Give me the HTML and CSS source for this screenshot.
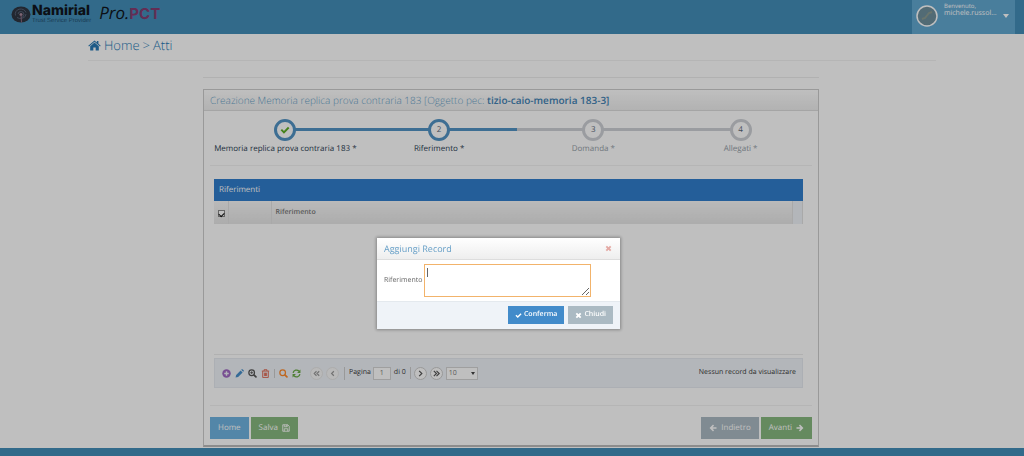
FILE: index.html
```html
<!DOCTYPE html>
<html lang="it">
<head>
<meta charset="utf-8">
<title>Pro.PCT - Atti</title>
<link rel="stylesheet" href="styles.css">
</head>
<body>
<svg class="defs" aria-hidden="true">
  <symbol id="check" viewBox="0 0 16 16"><path d="M1 8.5 3.2 6.3 6.3 9.4 12.8 2.9 15 5.1 6.3 13.8z"/></symbol>
  <symbol id="times" viewBox="0 0 16 16"><path d="M1.5 4.5 4.5 1.5 8 5 11.500 1.500 14.500 4.500 11 8 14.500 11.500 11.500 14.500 8 11 4.500 14.500 1.500 11.500 5 8z"/></symbol>
  <symbol id="arrow" viewBox="0 0 16 16"><path d="M1 6.500h8L5.800 3.300 8 1.100 14.900 8 8 14.900 5.800 12.700 9 9.500H1z"/></symbol>
  <symbol id="search" viewBox="0 0 16 16"><path fill="none" stroke="currentColor" stroke-width="2.200" d="M6.500 1.600a5 5 0 1 0 0 10 5 5 0 1 0 0-10z"/><path fill="none" stroke="currentColor" stroke-width="3" stroke-linecap="round" d="m10.800 10.800 3.300 3.300"/></symbol>
</svg>

<header class="navbar">
  <a class="brand" href="#">
    <svg class="brand-mark" viewBox="0 0 40 34" aria-hidden="true">
      <ellipse cx="20" cy="17" rx="19" ry="16" fill="#2e3440"/>
      <path d="M9 19a11 10 0 0 1 21-6M12 23a11 9 0 0 0 18-7M14 16a6 6 0 1 1 6 7" fill="none" stroke="#566176" stroke-width="2"/>
      <circle cx="20" cy="17" r="3" fill="#a98a9c"/>
      <path d="M20 18l1 15" stroke="#8c6a80" stroke-width="2"/>
    </svg>
    <span class="brand-name"><b>Namirial</b><small>Trust Service Provider</small></span>
    <span class="product"><i>Pro.</i><b>PCT</b></span>
  </a>
  <button class="user" type="button">
    <svg class="avatar" viewBox="0 0 22 22" aria-hidden="true"><circle cx="11" cy="11" r="10" fill="#6e8f9c" stroke="#fff" stroke-width="1.500"/><path d="M6 14l3-1 4-5 3-1" fill="none" stroke="#8d9c92" stroke-width="2"/></svg>
    <span class="user-text"><small>Benvenuto,</small><span>michele.russol...</span></span>
    <svg class="caret" viewBox="0 0 6 4" aria-hidden="true"><path d="M0 0h6L3 4z"/></svg>
  </button>
</header>

<main class="page">
  <nav class="crumbs">
    <svg class="home-icon" viewBox="0 0 16 14" aria-hidden="true"><path d="M8 3.200 2.500 8v5.500h4V9.500h3v4h4V8zM8 .5l3 2.600V1.200h2v3.700L15.900 7.400l-.9 1L8 2.300 1 8.400l-.9-1z"/></svg>
    <a href="#">Home</a> &gt; <span>Atti</span>
  </nav>
  <div class="content">
    <section class="widget">
      <h1 class="widget-title">Creazione Memoria replica prova contraria 183 [Oggetto pec: <b>tizio-caio-memoria 183-3]</b></h1>
      <div class="widget-body">
        <ol class="steps">
          <li class="active"><span class="dot"><svg class="tick" aria-hidden="true"><use href="#check"/></svg></span><span>Memoria replica prova contraria 183 *</span></li>
          <li class="active"><span class="dot">2</span><span>Riferimento *</span></li>
          <li><span class="dot">3</span><span>Domanda *</span></li>
          <li><span class="dot">4</span><span>Allegati *</span></li>
        </ol>
        <div class="grid">
          <h2 class="grid-title">Riferimenti</h2>
          <div class="grid-view">
            <table>
              <thead><tr><th class="pick"><input type="checkbox" checked aria-label="Seleziona tutti"></th><th class="actions"></th><th>Riferimento</th><th class="scroll"></th></tr></thead>
            </table>
          </div>
          <div class="pager">
            <div class="tools">
              <button type="button" class="purple" aria-label="Aggiungi"><svg viewBox="0 0 16 16"><circle cx="8" cy="8" r="7.500"/><path d="M8 4v8M4 8h8" stroke="#eff3f8" stroke-width="2.500"/></svg></button>
              <button type="button" class="blue" aria-label="Modifica"><svg viewBox="0 0 16 16"><path d="M1 15l1-4.500L10 2.500l3.500 3.500-8 8zM11 1.500l1-1q1-.6 2 .3l1.200 1.200q.9 1 .3 2l-1 1z"/></svg></button>
              <button type="button" class="dark" aria-label="Visualizza"><svg viewBox="0 0 16 16"><use href="#search"/><path d="M6.500 4v5M4 6.500h5" stroke="currentColor" stroke-width="1.500"/></svg></button>
              <button type="button" class="red" aria-label="Elimina"><svg viewBox="0 0 16 16"><path d="M1.500 3.700h13M5.500 3.500V1.300h5v2.200M3 4v11h10V4M6 6.500v6M8 6.500v6M10 6.500v6" fill="none" stroke="currentColor" stroke-width="1.500"/></svg></button>
              <i class="bar"></i>
              <button type="button" class="orange" aria-label="Cerca"><svg viewBox="0 0 16 16"><use href="#search"/></svg></button>
              <button type="button" class="green" aria-label="Aggiorna"><svg viewBox="0 0 16 16"><path d="M2 7a6 6 0 0 1 10.500-3M14 9a6 6 0 0 1-10.500 3" fill="none" stroke="currentColor" stroke-width="2.300"/><path d="M15 1v6H9zM1 15V9h6z"/></svg></button>
            </div>
            <div class="pages">
              <button type="button" class="round" disabled aria-label="Prima pagina"><svg viewBox="0 0 10 10"><path d="M5 2.500 2.500 5 5 7.500M8 2.500 5.500 5 8 7.500"/></svg></button>
              <button type="button" class="round" disabled aria-label="Pagina precedente"><svg viewBox="0 0 10 10"><path d="M6.500 2.500 4 5l2.500 2.500"/></svg></button>
              <label class="page-no">Pagina <input type="text" value="1"></label><span class="total">di 0</span>
              <button type="button" class="round" aria-label="Pagina successiva"><svg viewBox="0 0 10 10"><path d="M3.500 2l3 3-3 3"/></svg></button>
              <button type="button" class="round" aria-label="Ultima pagina"><svg viewBox="0 0 10 10"><path d="M2 2l3 3-3 3M5 2l3 3-3 3"/></svg></button>
              <span class="rows"><select aria-label="Record per pagina"><option>10</option></select></span>
            </div>
            <span>Nessun record da visualizzare</span>
          </div>
        </div>
        <div class="wizard">
          <button type="button" class="btn info">Home</button>
          <button type="button" class="btn success">Salva <svg viewBox="0 0 16 16" aria-hidden="true"><path d="M1.500 1.500h10l3 3v10h-13zM4.500 1.500v4h6v-4M4.500 14.500v-5h7v5M8.500 2v3" fill="none" stroke="currentColor" stroke-width="1.700"/></svg></button>
          <span class="push"></span>
          <button type="button" class="btn muted"><svg class="flip" aria-hidden="true"><use href="#arrow"/></svg> Indietro</button>
          <button type="button" class="btn success">Avanti <svg aria-hidden="true"><use href="#arrow"/></svg></button>
        </div>
      </div>
    </section>
  </div>
</main>
<footer class="footer"></footer>

<div class="overlay"></div>
<form class="dialog" role="dialog" aria-labelledby="dialog-title">
  <div class="dialog-head"><h2 id="dialog-title">Aggiungi Record</h2><button type="button" aria-label="Chiudi finestra"><svg><use href="#times"/></svg></button></div>
  <div class="dialog-body"><label for="rif">Riferimento</label><span class="field"><textarea id="rif"></textarea><i class="cursor"></i></span></div>
  <div class="dialog-foot">
    <button type="button" class="action primary"><svg aria-hidden="true"><use href="#check"/></svg>Conferma</button>
    <button type="button" class="action muted"><svg aria-hidden="true"><use href="#times"/></svg>Chiudi</button>
  </div>
</form>
</body>
</html>
```
FILE: styles.css
```css
* { box-sizing: border-box; }
body {
  margin: 0;
  min-height: 100vh;
  display: flex;
  flex-direction: column;
  background: #fff;
  color: #393939;
  font: 8px/12px "Open Sans", "Noto Sans", sans-serif;
  text-rendering: geometricPrecision;
}
button, input, select, textarea { font: inherit; color: inherit; margin: 0; text-rendering: inherit; }
button { border: 0; padding: 0; background: none; display: flex; align-items: center; }
h1, h2, ol { margin: 0; padding: 0; font-weight: 400; }
a { color: inherit; text-decoration: none; }
svg { display: block; flex: none; fill: currentColor; }
.defs { position: absolute; width: 0; height: 0; }

.navbar { height: 34px; padding: 0 9px 0 11px; display: flex; justify-content: space-between; background: #438eb9; }
.brand { display: flex; align-items: center; height: 28px; color: #10151c; }
.brand-mark { width: 20px; height: 17px; }
.brand-name { display: flex; flex-direction: column; margin-left: 1px; }
.brand-name b { font: 800 14px/14px Inter, sans-serif; }
.brand-name small { font: 6px/6px "Liberation Sans", sans-serif; color: #24506e; }
.product { display: flex; align-items: baseline; margin-left: 8px; font-size: 17px; }
.product i { font-family: "Open Sans", sans-serif; font-weight: 400; }
.product b { font: 700 15px/16px Inter, sans-serif; color: #843c70; }
.user { width: 103px; padding: 0 6px 0 4px; align-items: flex-start; background: #62a8d1; color: #fff; text-align: left; }
.avatar { width: 22px; height: 22px; margin-top: 5px; }
.user-text { display: flex; flex-direction: column; margin: 2px 0 0 6px; font-size: 7px; line-height: 8px; }
.user-text small { font-size: 6px; }
.caret { width: 6px; height: 4px; margin: 14px 0 0 auto; }

.page { flex: 1; padding: 0 88px; }
.crumbs { display: flex; align-items: center; gap: 3px; height: 27px; padding-bottom: 4px; border-bottom: 1px solid #f2f2f2; color: #2679b5; font-size: 13px; font-weight: 300; }
.home-icon { width: 13px; height: 11px; }
.content { margin: 16px 117px 0 115px; padding-top: 11px; border-top: 1px solid #ececec; }
.widget { border: 1px solid #ccc; border-bottom: 2px solid #bbb; }
.widget-title { padding: 0 6px; border-bottom: 1px solid #ddd; background: linear-gradient(#fff, #eee); color: #669fc7; font-size: 10px; line-height: 20px; font-weight: 300; white-space: nowrap; }
.widget-title b { color: #4383b4; font-weight: 600; }
.widget-body { padding: 8px 6px 6px; }

.steps { display: grid; grid-template-columns: 151fr 157fr 152fr 143fr; list-style: none; padding-bottom: 10px; border-bottom: 1px solid #f2f2f2; }
.steps li { position: relative; display: flex; flex-direction: column; align-items: center; gap: 2px; color: #949ea7; white-space: nowrap; }
.steps li::before { content: ""; position: absolute; top: 9px; left: 0; right: 0; height: 3px; background: #ced1d6; }
.steps li:first-child::before { left: 50%; }
.steps li:last-child::before { right: 50%; }
.steps .active { color: #2b3d53; }
.steps .active::before { background: #5293c4; }
.dot { position: relative; width: 22px; height: 22px; border: 3px solid #ced1d6; border-radius: 50%; background: #fff; color: #546474; line-height: 16px; text-align: center; }
.active .dot { border-color: #5293c4; }
.tick { width: 10px; height: 10px; margin: 3px auto; color: #5cae24; }

.grid { margin: 13px 9px 0 4px; }
.grid-title { padding: 0 5px; background: #307ecc; color: #fff; font-size: 8px; line-height: 22px; }
.grid-view { min-height: 154px; border-bottom: 1px solid #ececec; }
table { width: 100%; table-layout: fixed; border-collapse: collapse; }
th { height: 23px; padding: 0 4px; border-right: 1px solid #e2e2e2; background: linear-gradient(#f8f8f8, #e6e6e6); color: #777; font-size: 7px; font-weight: 600; text-align: left; }
.pick { width: 14px; }
.actions { width: 43px; }
.scroll { width: 10px; background: #eff3f8; }
.pick input { display: grid; place-items: center; width: 7px; height: 7px; margin-top: 2px; appearance: none; border: 1px solid #888; background: #fff; }
.pick input:checked::before { content: ""; width: 4px; height: 3px; border: solid #111; border-width: 0 0 1px 1px; transform: rotate(-45deg); }
.pager { display: flex; align-items: center; height: 30px; margin-top: 3px; padding: 0 6px 0 7px; background: #eff3f8; border: 1px solid #e6eaf0; font-size: 7px; }
.tools, .pages { display: flex; align-items: center; }
.tools { gap: 4px; }
.tools svg { width: 9px; height: 9px; }
.bar { width: 1px; height: 9px; background: #ccc; }
.purple { color: #a069c3; }
.blue { color: #478fca; }
.dark { color: #555; }
.red { color: #dd5a43; }
.orange { color: #ff892a; }
.green { color: #69aa46; }
.pages { gap: 3px; margin: 0 auto 0 9px; }
.round { width: 13px; height: 13px; justify-content: center; border: 1px solid #ccc; border-radius: 50%; background: #fff; color: #555; }
.round:disabled { border-color: #e6e6e6; background: #f7f7f7; color: #999; }
.round svg { width: 9px; height: 9px; fill: none; stroke: currentColor; stroke-width: 1.3; }
.page-no { display: flex; align-items: center; gap: 2px; padding-left: 4px; margin-left: 2px; border-left: 1px solid #ccc; }
.page-no input { width: 18px; height: 13px; padding: 0; border: 1px solid #d5d5d5; background: #fff; text-align: center; color: #777; }
.total { padding-right: 4px; border-right: 1px solid #ccc; }
.rows { position: relative; }
.rows select { display: block; width: 32px; height: 13px; padding: 0 2px; border: 1px solid #d5d5d5; background: #fff; appearance: none; color: #777; }
.rows::after { content: ""; position: absolute; right: 3px; top: 5px; border: 2px solid transparent; border-top: 3px solid #444; }

.wizard { display: flex; gap: 2px; margin-top: 17px; padding-top: 11px; border-top: 1px solid #f2f2f2; }
.push { flex: 1; }
.btn { height: 22px; padding: 0 8px; gap: 4px; color: #fff; }
.btn svg { width: 8px; height: 8px; }
.flip { transform: scaleX(-1); }
.info { background: #6fb3e0; }
.success { background: #87b87f; }
.muted { background: #abbac3; }
.footer { height: 8px; background: #438eb9; }

.overlay { position: fixed; inset: 0; background: rgba(0, 0, 0, 0.25); }
.dialog { position: fixed; top: 238px; left: calc(50% - 135px); width: 243px; background: #fff; box-shadow: 0 0 3px 1px rgba(0, 0, 0, 0.3); }
.dialog-head { display: flex; justify-content: space-between; align-items: center; height: 22px; padding: 0 8px 0 7px; border-bottom: 1px solid #ddd; background: linear-gradient(#fff, #eee); color: #669fc7; }
.dialog-head h2 { font-size: 9px; }
.dialog-head svg { width: 7px; height: 7px; color: #e4a9a4; }
.dialog-body { display: flex; align-items: center; gap: 2px; padding: 4px 7px; font-size: 7px; color: #666; }
.field { position: relative; }
textarea { display: block; width: 167px; height: 33px; border: 1px solid #f2b36b; outline: 0; }
.cursor { position: absolute; left: 3px; top: 4px; width: 1px; height: 9px; background: #666; }
.dialog-foot { display: flex; justify-content: flex-end; gap: 4px; padding: 4px 7px 5px; border-top: 1px solid #e4e9ee; background: #eff3f8; }
.action { height: 18px; padding: 0 7px; gap: 2px; color: #fff; font-size: 7px; font-weight: 600; }
.action svg { width: 7px; height: 7px; }
.primary { background: #428bca; }
```
